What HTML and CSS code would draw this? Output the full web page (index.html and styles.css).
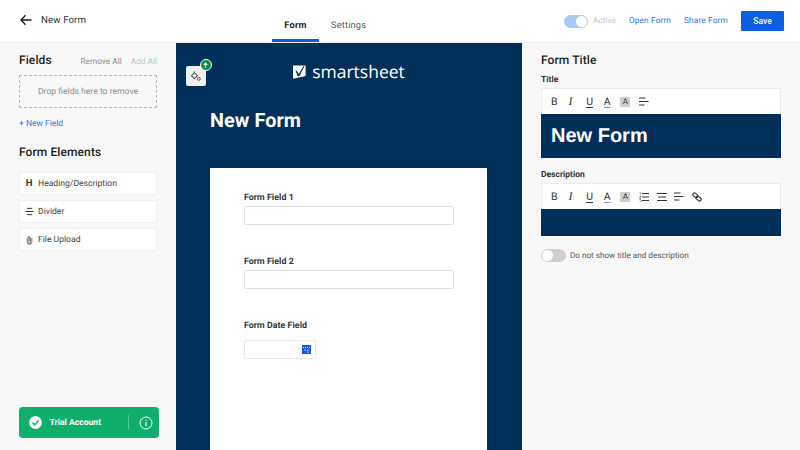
FILE: index.html
```html
<!DOCTYPE html>
<html lang="en">
<head>
<meta charset="utf-8">
<title>New Form</title>
<link rel="stylesheet" href="styles.css">
</head>
<body>
<div class="app">
  <header class="topbar">
    <div class="top-left">
      <svg class="back" viewBox="0 0 12 12" width="12" height="12"><path d="M11.500 6H1M5.600 1.200 1 6l4.600 4.800" fill="none" stroke="#1a1a1a" stroke-width="1.300"/></svg>
      <span class="page-name">New Form</span>
    </div>
    <nav class="tabs">
      <span class="tab tab-active">Form</span>
      <span class="tab">Settings</span>
    </nav>
    <div class="top-right">
      <span class="toggle-on"><span class="knob"></span></span>
      <span class="active-label">Active</span>
      <a class="top-link link-open">Open Form</a>
      <a class="top-link link-share">Share Form</a>
      <button class="save">Save</button>
    </div>
  </header>
  <main class="body">
    <aside class="left">
      <div class="fields-head">
        <h2 class="h">Fields</h2>
        <div class="fields-actions"><span class="remove-all">Remove All</span><span class="add-all">Add All</span></div>
      </div>
      <div class="dropzone">Drop fields here to remove</div>
      <a class="new-field">+ New Field</a>
      <h2 class="h elements-h">Form Elements</h2>
      <div class="element"><span class="el-icon el-h">H</span>Heading/Description</div>
      <div class="element"><span class="el-icon"><svg viewBox="0 0 10 10" width="9" height="9"><path d="M2 1.500h6M0.500 5h9M2 8.500h6" stroke="#333" stroke-width="1.100"/></svg></span>Divider</div>
      <div class="element"><span class="el-icon"><svg viewBox="0 0 8 11" width="7" height="10"><path d="M5.500 3v5a1.600 1.600 0 0 1-3.200 0V2.500a1 1 0 0 1 2 0V7" fill="none" stroke="#444" stroke-width="1"/><path d="M1.200 3.500v4.400a2.800 2.800 0 0 0 5.600 0V3" fill="none" stroke="#777" stroke-width=".8"/></svg></span>File Upload</div>
      <div class="trial">
        <svg class="trial-check" viewBox="0 0 14 14" width="13" height="13"><circle cx="7" cy="7" r="6.900" fill="#fff"/><path d="M3.800 7.200 6.200 9.600 10.300 4.800" fill="none" stroke="#0fae6a" stroke-width="1.700"/></svg>
        <span class="trial-text">Trial Account</span>
        <span class="trial-sep"></span>
        <svg class="trial-info" viewBox="0 0 14 14" width="14" height="14"><circle cx="7" cy="7" r="6" fill="none" stroke="#fff" stroke-width="1"/><path d="M7 6v4.200M7 3.700v1.200" stroke="#fff" stroke-width="1.100"/></svg>
      </div>
    </aside>
    <section class="canvas">
      <div class="theme-btn">
        <svg viewBox="0 0 12 12" width="11" height="11"><path d="M4.800 1.800 1.600 5.200l3.200 3.200 3.200-3.200z" fill="none" stroke="#555" stroke-width="1.100"/><circle cx="9.600" cy="8.600" r="1.600" fill="none" stroke="#555"/><path d="M4.800 .2v2" stroke="#555"/></svg>
        <span class="theme-badge"><svg viewBox="0 0 6 7" width="5" height="6"><path d="M3 7V3M.8 3.200 3 .6l2.200 2.600z" fill="#fff" stroke="#fff" stroke-width=".8"/></svg></span>
      </div>
      <div class="logo">
        <svg viewBox="0 0 13 14" width="13" height="14"><path d="M0 .5h12.600v10.600L0 13.700z" fill="#fff"/><path d="M3 5.400 5.900 9.600 10.800 1.300 6.200 10.900H4.900z" fill="#003059" stroke="#003059" stroke-width=".8"/></svg>
        <span class="logo-text">smartsheet</span>
      </div>
      <h1 class="form-title">New Form</h1>
      <div class="card">
        <label class="f-label">Form Field 1</label>
        <div class="f-input"></div>
        <label class="f-label">Form Field 2</label>
        <div class="f-input"></div>
        <label class="f-label">Form Date Field</label>
        <div class="f-date">
          <svg viewBox="0 0 9 9" width="9" height="9"><rect width="9" height="9" fill="#0c5fe0"/><path d="M1 2.500h7" stroke="#cfe0fb" stroke-dasharray="1 1"/><path d="M2.500 4.500h1.400v1.200H2.500zM5.200 4.500h1.400v1.200H5.200zM5.200 6.600h1.400v1H5.200z" fill="#cfe0fb"/></svg>
        </div>
      </div>
    </section>
    <aside class="right">
      <h2 class="h">Form Title</h2>
      <label class="r-label r-label-title">Title</label>
      <div class="editor">
        <div class="toolbar">
          <span class="tb tb-b">B</span><span class="tb tb-i">I</span><span class="tb tb-u">U</span><span class="tb tb-c">A</span><span class="tb tb-bg-wrap"><span class="tb-bg">A</span></span>
          <span class="tb"><svg viewBox="0 0 10 9" width="10" height="9"><path d="M0 1h6.500M0 4.500h9.500M0 8h5.500" stroke="#333" stroke-width="1.100"/></svg></span>
        </div>
        <div class="edit-title">New Form</div>
      </div>
      <label class="r-label r-label-desc">Description</label>
      <div class="editor">
        <div class="toolbar">
          <span class="tb tb-b">B</span><span class="tb tb-i">I</span><span class="tb tb-u">U</span><span class="tb tb-c">A</span><span class="tb tb-bg-wrap"><span class="tb-bg">A</span></span>
          <span class="tb"><svg viewBox="0 0 10 10" width="10" height="10"><path d="M3 1.500h7M3 5h7M3 8.500h7" stroke="#333" stroke-width="1"/><path d="M.5 .5h1.200v2M.5 4.500h1.500L.5 6.500h1.500M.5 7.500H2v2.200H.5" fill="none" stroke="#555" stroke-width=".6"/></svg></span>
          <span class="tb"><svg viewBox="0 0 10 10" width="10" height="10"><path d="M0 1.500h10M1 5h8M0 8.500h10" stroke="#333" stroke-width="1"/></svg></span>
          <span class="tb"><svg viewBox="0 0 10 9" width="10" height="9"><path d="M0 1h6.500M0 4.500h9.500M0 8h5.500" stroke="#333" stroke-width="1.100"/></svg></span>
          <span class="tb"><svg viewBox="0 0 10 10" width="10" height="10"><rect x=".6" y="1.700" width="5.600" height="3.400" rx="1.700" transform="rotate(40 3.400 3.400)" fill="none" stroke="#333" stroke-width="1.100"/><rect x="3.800" y="4.900" width="5.600" height="3.400" rx="1.700" transform="rotate(40 6.600 6.600)" fill="none" stroke="#333" stroke-width="1.100"/></svg></span>
        </div>
        <div class="edit-desc"></div>
      </div>
      <div class="hide-row">
        <span class="toggle-off"><span class="knob"></span></span>
        <span>Do not show title and description</span>
      </div>
    </aside>
  </main>
</div>
</body>
</html>
```
FILE: styles.css
```css
* { box-sizing: border-box; }
html, body { margin: 0; padding: 0; }
body { width: 800px; height: 450px; overflow: hidden; font-family: Roboto, "Liberation Sans", sans-serif; color: #2b2b2b; background: #fff; text-rendering: geometricPrecision; }
.app { display: flex; flex-direction: column; height: 450px; }
.topbar { height: 43px; flex: none; display: flex; background: #fff; border-bottom: 1px solid #eee; }
.top-left { width: 272px; display: flex; align-items: center; padding: 0 0 2px 20px; flex: none; }
.back { margin-right: 9px; }
.page-name { font-size: 9.700px; letter-spacing: .1px; color: #333; }
.tabs { display: flex; flex: none; height: 42px; }
.tab { height: 42px; padding: 20px 0 0; font-size: 9.200px; letter-spacing: .2px; color: #555; margin-left: 12px; }
.tab-active { width: 47px; margin-left: 0; text-align: center; font-weight: 700; color: #222; border-bottom: 3px solid #0c5fe0; }
.top-right { flex: 1; display: flex; align-items: center; padding: 0 16px 0 0; justify-content: flex-end; font-size: 8.300px; }
.toggle-on { width: 24px; height: 13px; background: #adcaf6; border-radius: 7px; position: relative; }
.toggle-on .knob { position: absolute; right: 1px; top: 1px; width: 11px; height: 11px; border-radius: 50%; background: #fff; }
.active-label { color: #c9c9c9; margin: 0 13px 0 5px; }
.top-link { color: #2c78e8; letter-spacing: .15px; }
.link-open { margin-right: 13px; }
.link-share { margin-right: 13px; }
.save { width: 43px; height: 20px; border: 0; background: #0c5fe0; color: #fff; font: 500 8.500px Roboto, "Liberation Sans", sans-serif; border-radius: 1px; padding: 0; }
.body { flex: 1; display: flex; min-height: 0; }
.left { width: 176px; flex: none; background: #f8f8f8; padding: 9px 19px 0; position: relative; }
.h { margin: 0; font-size: 12px; line-height: 16px; font-weight: 500; color: #1f1f1f; letter-spacing: .1px; }
.fields-head { display: flex; justify-content: space-between; align-items: flex-end; width: 138px; }
.fields-actions { font-size: 8.300px; display: flex; gap: 9px; line-height: 11px; padding-bottom: 0; }
.remove-all { color: #8f8f8f; }
.add-all { color: #c8c8c8; }
.dropzone { width: 138px; height: 33px; margin-top: 7px; border: 1px dashed #b9b9b9; display: flex; align-items: center; justify-content: center; font-size: 8.600px; color: #8e8e8e; }
.new-field { display: block; margin-top: 10px; font-size: 8.500px; line-height: 13px; color: #2c78e8; }
.elements-h { margin: 13px 0 12px; }
.element { width: 138px; height: 23px; margin-bottom: 5.200px; background: #fff; border: 1px solid #f0f0f0; border-radius: 2px; display: flex; align-items: center; font-size: 8.600px; color: #444; }
.el-icon { width: 18px; flex: none; display: flex; justify-content: center; }
.el-h { font-weight: 700; color: #333; font-size: 9.500px; }
.trial { position: absolute; left: 18.500px; top: 364px; width: 140px; height: 31px; background: #0fae6a; border-radius: 4px; display: flex; align-items: center; color: #fff; padding-left: 10px; }
.trial-text { font-size: 8.600px; font-weight: 700; margin-left: 8px; width: 78px; white-space: nowrap; }
.trial-sep { width: 1px; height: 15px; background: #5ac896; }
.trial-info { margin-left: 10px; }
.canvas { width: 346px; flex: none; background: #003059; position: relative; overflow: hidden; padding: 0 34px; }
.theme-btn { position: absolute; left: 9.500px; top: 23px; width: 20px; height: 20px; background: #f0f0f0; border-radius: 2px; display: flex; align-items: center; justify-content: center; }
.theme-badge { position: absolute; right: -6px; top: -7px; width: 12px; height: 12px; background: #0c8a47; border: 1px solid #fff; border-radius: 50%; display: flex; align-items: center; justify-content: center; }
.logo { display: flex; align-items: center; justify-content: center; height: 18px; margin-top: 20px; gap: 6px; }
.logo-text { font-family: "Open Sans", sans-serif; font-size: 17.500px; line-height: 18px; color: #fff; }
.form-title { margin: 26px 0 0; font-size: 19.800px; line-height: 28px; font-weight: 700; color: #fff; letter-spacing: .1px; }
.card { width: 277px; height: 300px; margin-top: 33px; background: #fff; padding: 24px 34px; }
.f-label { display: block; font-size: 8.800px; font-weight: 700; color: #333; line-height: 12px; letter-spacing: .05px; margin-bottom: 2px; }
.f-input { width: 210px; height: 19px; border: 1px solid #e0e0e0; border-radius: 2px; margin-bottom: 31px; background: #fff; }
.f-date { width: 72px; height: 19px; border: 1px solid #e8e8e8; border-radius: 2px; display: flex; align-items: center; justify-content: flex-end; padding-right: 4px; margin-top: 8px; }
.right { flex: 1; background: #f8f8f8; padding: 9px 19px 0 19px; }
.r-label { display: block; font-size: 8.500px; font-weight: 700; color: #333; line-height: 11px; }
.r-label-title { margin: 7px 0 2px; }
.r-label-desc { margin: 12px 0 2px; }
.editor { width: 240px; }
.toolbar { height: 26px; background: #fff; display: flex; align-items: center; padding: 0 0 0 8px; border: 1px solid #ebebeb; border-bottom: 0; }
.tb { width: 17.600px; padding-left: 1px; font-size: 10.500px; line-height: 13px; color: #333; flex: none; height: 13px; display: flex; align-items: center; }
.tb-i { font-style: italic; font-family: "Liberation Serif", serif; font-size: 12px; }
.tb-u { text-decoration: underline; text-underline-offset: 1.500px; }
.tb-c { text-decoration: underline; text-decoration-color: #999; text-underline-offset: 1.500px; }
.tb-bg-wrap { padding-left: 0; }
.tb-bg { width: 10px; height: 10px; font-size: 8px; line-height: 10px; text-align: center; background: #cfcfcf; }
.edit-title { height: 44px; background: #003059; color: #fff; font: 700 20px/45px "Liberation Sans", sans-serif; padding-left: 10px; }
.edit-desc { height: 27px; background: #003059; }
.hide-row { display: flex; align-items: center; gap: 4px; margin-top: 12.500px; font-size: 8.150px; color: #555; }
.toggle-off { width: 25px; height: 13px; background: #cfcfcf; border-radius: 7px; position: relative; }
.toggle-off .knob { position: absolute; left: 1px; top: 1px; width: 11px; height: 11px; border-radius: 50%; background: #fff; }
```
